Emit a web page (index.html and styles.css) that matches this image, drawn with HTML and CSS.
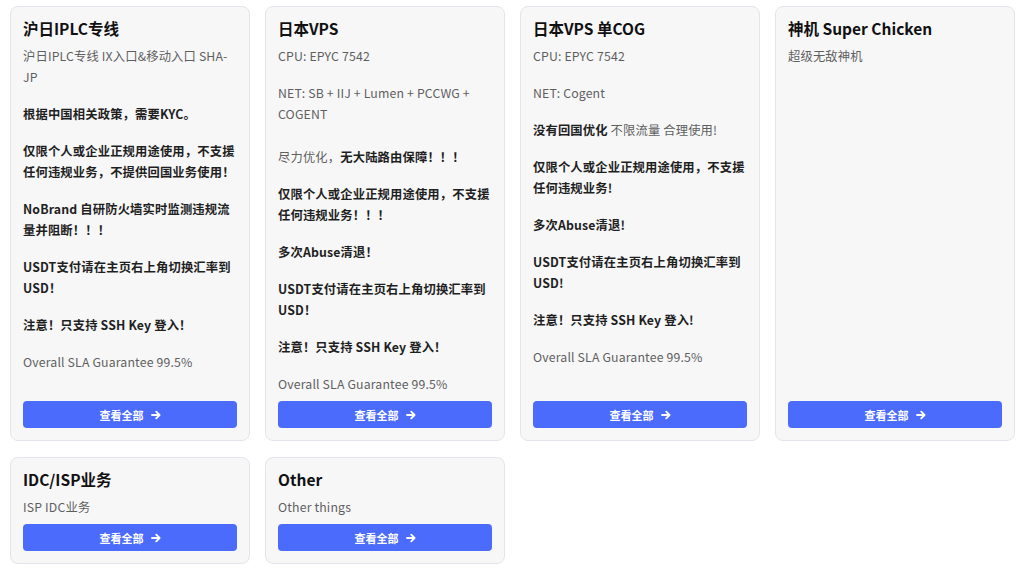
FILE: index.html
```html
<!DOCTYPE html>
<html lang="zh-CN">
<head>
<meta charset="utf-8">
<title>Products</title>
<link rel="stylesheet" href="styles.css">
</head>
<body>
<div class="grid">
  <div class="card">
    <h3 class="card-title">沪日IPLC专线</h3>
    <div class="card-desc">
      <p>沪日IPLC专线 IX入口&amp;移动入口 SHA-JP</p>
      <p class="b">根据中国相关政策，需要KYC。</p>
      <p class="b">仅限个人或企业正规用途使用，不支援任何违规业务，不提供回国业务使用！</p>
      <p class="b">NoBrand 自研防火墙实时监测违规流量并阻断！！！</p>
      <p class="b">USDT支付请在主页右上角切换汇率到USD！</p>
      <p class="b">注意！只支持 SSH Key 登入！</p>
      <p>Overall SLA Guarantee 99.5%</p>
    </div>
    <a class="btn" href="#">查看全部 <svg class="arrow" viewBox="0 0 10 10"><path d="M1 5H8.5M5.2 1.6L8.6 5L5.2 8.4"/></svg></a>
  </div>
  <div class="card">
    <h3 class="card-title">日本VPS</h3>
    <div class="card-desc">
      <p>CPU: EPYC 7542</p>
      <p>NET: SB + IIJ + Lumen + PCCWG + COGENT</p>
      <p class="extra">尽力优化，<strong>无大陆路由保障！！！</strong></p>
      <p class="b">仅限个人或企业正规用途使用，不支援任何违规业务！！！</p>
      <p class="b">多次Abuse清退！</p>
      <p class="b">USDT支付请在主页右上角切换汇率到USD！</p>
      <p class="b">注意！只支持 SSH Key 登入！</p>
      <p>Overall SLA Guarantee 99.5%</p>
    </div>
    <a class="btn" href="#">查看全部 <svg class="arrow" viewBox="0 0 10 10"><path d="M1 5H8.5M5.2 1.6L8.6 5L5.2 8.4"/></svg></a>
  </div>
  <div class="card">
    <h3 class="card-title">日本VPS 单COG</h3>
    <div class="card-desc">
      <p>CPU: EPYC 7542</p>
      <p>NET: Cogent</p>
      <p><strong>没有回国优化</strong> 不限流量 合理使用!</p>
      <p class="b">仅限个人或企业正规用途使用，不支援任何违规业务!</p>
      <p class="b">多次Abuse清退!</p>
      <p class="b">USDT支付请在主页右上角切换汇率到USD!</p>
      <p class="b">注意！只支持 SSH Key 登入!</p>
      <p>Overall SLA Guarantee 99.5%</p>
    </div>
    <a class="btn" href="#">查看全部 <svg class="arrow" viewBox="0 0 10 10"><path d="M1 5H8.5M5.2 1.6L8.6 5L5.2 8.4"/></svg></a>
  </div>
  <div class="card">
    <h3 class="card-title">神机 Super Chicken</h3>
    <div class="card-desc">
      <p>超级无敌神机</p>
    </div>
    <a class="btn" href="#">查看全部 <svg class="arrow" viewBox="0 0 10 10"><path d="M1 5H8.5M5.2 1.6L8.6 5L5.2 8.4"/></svg></a>
  </div>
  <div class="card">
    <h3 class="card-title">IDC/ISP业务</h3>
    <div class="card-desc">
      <p>ISP IDC业务</p>
    </div>
    <a class="btn" href="#">查看全部 <svg class="arrow" viewBox="0 0 10 10"><path d="M1 5H8.5M5.2 1.6L8.6 5L5.2 8.4"/></svg></a>
  </div>
  <div class="card">
    <h3 class="card-title">Other</h3>
    <div class="card-desc">
      <p>Other things</p>
    </div>
    <a class="btn" href="#">查看全部 <svg class="arrow" viewBox="0 0 10 10"><path d="M1 5H8.5M5.2 1.6L8.6 5L5.2 8.4"/></svg></a>
  </div>
</div>
</body>
</html>
```

FILE: styles.css
```css
* { box-sizing: border-box; }
html, body { margin: 0; padding: 0; background: #ffffff; }
body {
  font-family: "Noto Sans CJK SC", "Noto Sans", sans-serif;
  color: #222;
}
.grid {
  display: grid;
  grid-template-columns: repeat(4, 240px);
  column-gap: 15px;
  row-gap: 16px;
  padding: 6px 10px 0 10px;
}
.card {
  display: flex;
  flex-direction: column;
  background: #f7f7f8;
  border: 1px solid #e2e5ec;
  border-radius: 8px;
  padding: 11px 12px 12px 12px;
}
.card-title {
  margin: 0 0 8px 0;
  font-size: 15.5px;
  line-height: 20px;
  font-weight: 700;
  color: #111;
}
.card-desc {
  display: flex;
  flex-direction: column;
  gap: 16px;
  margin-bottom: 6px;
  font-size: 12.3px;
  line-height: 21px;
  letter-spacing: 0.15px;
  color: #5f5f5f;
}
.card-desc p { margin: 0; }
.card-desc .b, .card-desc strong {
  font-weight: 700;
  color: #1f1f1f;
}
.card-desc .extra { margin-top: 6px; }
.btn {
  margin-top: auto;
  display: flex;
  align-items: center;
  justify-content: center;
  gap: 7px;
  height: 27px;
  border-radius: 4px;
  background: #4b6bfd;
  color: #fff;
  font-size: 11px;
  font-weight: 700;
  text-decoration: none;
}
.arrow {
  width: 10px;
  height: 10px;
  fill: none;
  stroke: #fff;
  stroke-width: 1.8;
  stroke-linecap: round;
  stroke-linejoin: round;
}
```
